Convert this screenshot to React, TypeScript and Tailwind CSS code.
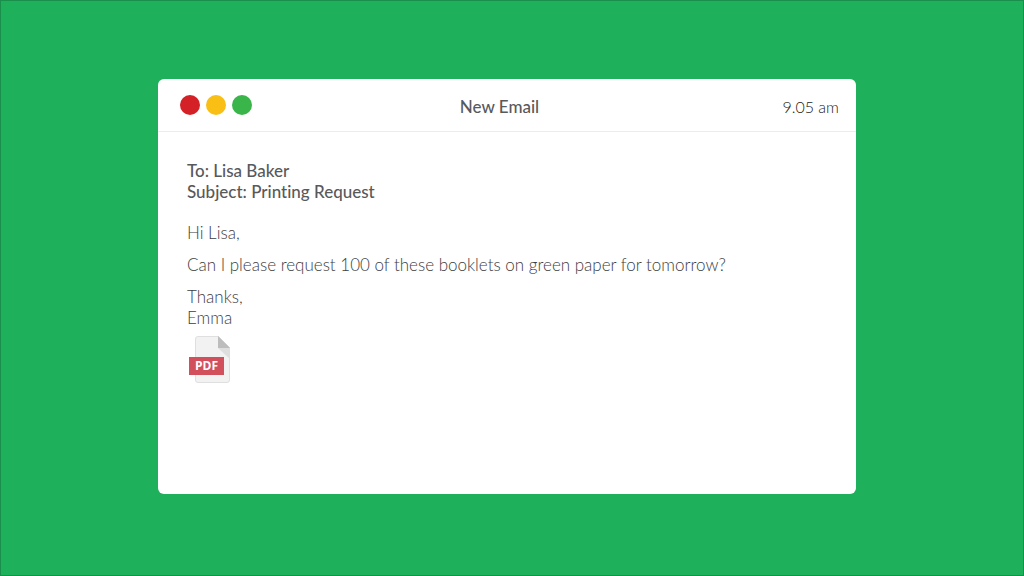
const windowControls = [
	{ label: 'Close', color: 'bg-[#d42127]' },
	{ label: 'Minimise', color: 'bg-[#f9bf15]' },
	{ label: 'Maximise', color: 'bg-[#3ab54a]' },
];

function PdfIcon() {
	return (
		<svg width="42" height="47" viewBox="0 0 42 47" className="block" aria-hidden="true">
			<path
				d="M9 .5H29.5L40.5 11.5V44A2.5 2.5 0 0 1 38 46.5H9A2.5 2.5 0 0 1 6.5 44V3A2.5 2.5 0 0 1 9 .5Z"
				fill="#f2f2f2"
				stroke="#dfdfdf"
			/>
			<path d="M29 12H41V23Z" fill="#dedede" />
			<path d="M29 0L41 12H29Z" fill="#bdbdbd" />
			<rect x="0" y="21" width="35" height="18" fill="#d2505c" />
			<text
				x="17.5"
				y="34"
				textAnchor="middle"
				fill="#fff"
				fontSize="12"
				fontWeight="700"
				fontFamily="'Open Sans', sans-serif"
			>
				PDF
			</text>
		</svg>
	);
}

function App() {
	return (
		<main className="min-h-screen flex items-center justify-center bg-[#1eb05b] border border-[#198f4b] pr-[10px] pb-[3px] font-['Lato',sans-serif] [font-variant-ligatures:none] text-[#58595b]">
			<section className="w-full max-w-[698px] min-h-[415px] bg-white rounded-md">
				<header className="grid grid-cols-[1fr_auto_1fr] items-center h-[53px] pl-[22px] pr-[17px] border-b border-[#ececec]">
					<div className="flex gap-[6px]">
						{windowControls.map((control) => (
							<button
								key={control.label}
								type="button"
								aria-label={control.label}
								className={`size-5 rounded-full ${control.color}`}
							/>
						))}
					</div>
					<h1 className="pt-[2px] pr-5 text-[17px] leading-[21px] font-medium">New Email</h1>
					<time className="pt-[2px] text-right text-[16px] leading-[21px] font-light text-[#222]">9.05 am</time>
				</header>

				<div className="px-[29px] pt-7 pb-8 text-[17px] leading-[21px] font-light text-[#3c3d3f]">
					<div className="mb-5 font-medium text-[#58595b]">
						<p>To: Lisa Baker</p>
						<p>Subject: Printing Request</p>
					</div>
					<div className="flex flex-col gap-[11px]">
						<p>Hi Lisa,</p>
						<p>Can I please request 100 of these booklets on green paper for tomorrow?</p>
						<p>
							Thanks,
							<br />
							Emma
						</p>
					</div>
					<button type="button" aria-label="Open PDF attachment" className="mt-2 ml-[2px] block">
						<PdfIcon />
					</button>
				</div>
			</section>
		</main>
	);
}

export default App;
